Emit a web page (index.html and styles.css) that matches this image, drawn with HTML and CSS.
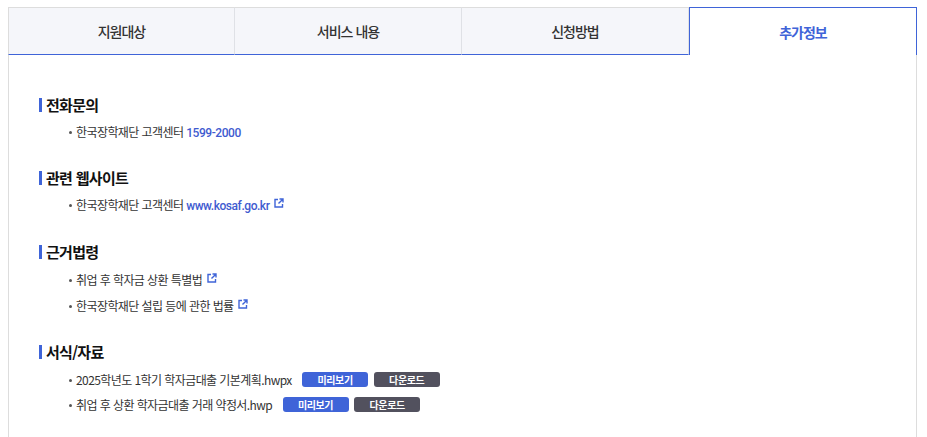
FILE: index.html
```html
<!DOCTYPE html>
<html lang="ko">
<head>
    <meta charset="UTF-8">
    <meta name="viewport" content="width=device-width, initial-scale=1.0">
    <title>추가정보</title>
    <link rel="stylesheet" href="styles.css">
</head>
<body>
    <div class="tabs">
        <a href="#" class="tab">지원대상</a>
        <a href="#" class="tab">서비스 내용</a>
        <a href="#" class="tab">신청방법</a>
        <a href="#" class="tab active">추가정보</a>
    </div>

    <div class="panel">
        <section class="info compact">
            <h3>전화문의</h3>
            <ul>
                <li>한국장학재단 고객센터 <a href="#" class="link">1599-2000</a></li>
            </ul>
        </section>

        <section class="info compact">
            <h3>관련 웹사이트</h3>
            <ul>
                <li>한국장학재단 고객센터 <a href="#" class="link">www.kosaf.go.kr</a>
                    <svg class="ext" viewBox="0 0 10 10"><path d="M4 1.500H1v7.500h7.500V6M5.500 1H9V4.500M8.800 1.200L4.500 5.500"/></svg>
                </li>
            </ul>
        </section>

        <section class="info">
            <h3>근거법령</h3>
            <ul>
                <li>취업 후 학자금 상환 특별법
                    <svg class="ext" viewBox="0 0 10 10"><path d="M4 1.500H1v7.500h7.500V6M5.500 1H9V4.500M8.800 1.200L4.500 5.500"/></svg>
                </li>
                <li>한국장학재단 설립 등에 관한 법률
                    <svg class="ext" viewBox="0 0 10 10"><path d="M4 1.500H1v7.500h7.500V6M5.500 1H9V4.500M8.800 1.200L4.500 5.500"/></svg>
                </li>
            </ul>
        </section>

        <section class="info">
            <h3>서식/자료</h3>
            <ul class="files">
                <li>
                    <span class="file-name">2025학년도 1학기 학자금대출 기본계획.hwpx</span>
                    <a href="#" class="btn preview">미리보기</a>
                    <a href="#" class="btn download">다운로드</a>
                </li>
                <li>
                    <span class="file-name">취업 후 상환 학자금대출 거래 약정서.hwp</span>
                    <a href="#" class="btn preview">미리보기</a>
                    <a href="#" class="btn download">다운로드</a>
                </li>
            </ul>
        </section>
    </div>
</body>
</html>
```

FILE: styles.css
```css
/* General body styling */
body {
    font-family: "Noto Sans CJK KR", "Noto Sans", sans-serif;
    margin: 0;
    padding: 7px 10px 0 8px;
    background-color: #ffffff;
    color: #222222;
    height: 430px;
    overflow: hidden;
}

a {
    text-decoration: none;
}

/* Tabs */
.tabs {
    display: flex;
    height: 48px;
}

.tab {
    box-sizing: border-box;
    flex: 0 0 227px;
    display: flex;
    align-items: center;
    justify-content: center;
    background-color: #f5f6fa;
    border-top: 1px solid #dddddd;
    border-right: 1px solid #dfe1e6;
    border-bottom: 1px solid #3f64d8;
    color: #333333;
    font-size: 14px;
    font-weight: 500;
    letter-spacing: -1px;
}

.tab:first-child {
    border-left: 1px solid #dddddd;
}

.tab.active {
    flex: 1 1 0;
    background-color: #ffffff;
    border: 1px solid #3f64d8;
    border-bottom: none;
    color: #3f64d8;
    font-weight: 700;
}

/* Content panel */
.panel {
    box-sizing: border-box;
    border-left: 1px solid #dddddd;
    border-right: 1px solid #dddddd;
    padding: 43px 30px 0;
    height: 382px;
}

.info {
    margin-bottom: 26px;
}

.info.compact + .info.compact {
    margin-bottom: 27px;
}

.info h3 {
    margin: 0 0 8px;
    padding-left: 4px;
    border-left: 3px solid #3f64d8;
    font-size: 15px;
    line-height: 14px;
    font-weight: 700;
    color: #111111;
    letter-spacing: -0.7px;
}

.info.compact h3 {
    margin-bottom: 7px;
}

.info ul {
    list-style: none;
    margin: 0;
    padding: 0 0 0 29px;
}

.info li {
    position: relative;
    padding-left: 8px;
    font-size: 12px;
    line-height: 26px;
    letter-spacing: -0.58px;
    color: #333333;
}

.info li::before {
    content: "";
    position: absolute;
    left: 1px;
    top: 12px;
    width: 3px;
    height: 3px;
    border-radius: 50%;
    background-color: #555555;
}

.link {
    font-family: Roboto, sans-serif;
    color: #3f5bd0;
    font-weight: 500;
    letter-spacing: -0.45px;
    line-height: 1;
}

.ext {
    width: 10px;
    height: 10px;
    margin-left: 2px;
    vertical-align: 2px;
    fill: none;
    stroke: #3f64d8;
    stroke-width: 1.4;
}

/* File rows */
.files li {
    display: flex;
    align-items: center;
    line-height: 25px;
}

.file-name {
    margin-right: 10.4px;
}

.btn {
    width: 66px;
    height: 15px;
    line-height: 15px;
    margin-right: 5.6px;
    border-radius: 3px;
    text-align: center;
    color: #ffffff;
    font-size: 10px;
    font-weight: 700;
    letter-spacing: -0.4px;
}

.btn.preview {
    background-color: #3f64d8;
}

.btn.download {
    background-color: #52515e;
}
```
